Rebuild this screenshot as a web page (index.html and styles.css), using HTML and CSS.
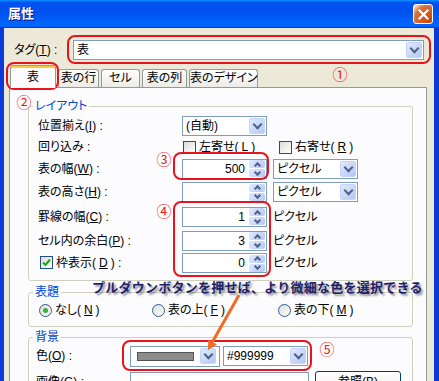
FILE: index.html
```html
<!DOCTYPE html>
<html lang="ja">
<head>
    <meta charset="UTF-8">
    <meta name="viewport" content="width=device-width, initial-scale=1.0">
    <title>属性</title>
    <link rel="stylesheet" href="styles.css">
</head>
<body>
<div class="window">
    <div class="titlebar">
        <span class="title">属性</span>
        <span class="close">
            <svg width="11" height="11" viewBox="0 0 11 11"><path d="M1.5 1.5 L9.5 9.5 M9.5 1.5 L1.5 9.5" stroke="#fff" stroke-width="2.2" stroke-linecap="square"/></svg>
        </span>
    </div>

    <div class="frame">
        <div class="tag-row">
            <span class="tag-label">タグ(<u>T</u>) :</span>
            <div class="select tag-select"><span class="value">表</span><span class="drop"></span></div>
        </div>

        <div class="tabs">
            <div class="tab active">表</div>
            <div class="tab tab-row">表の行</div>
            <div class="tab tab-cell">セル</div>
            <div class="tab tab-col">表の列</div>
            <div class="tab tab-design">表のデザイン</div>
        </div>

        <div class="panel">
            <fieldset class="group">
                <legend>レイアウト</legend>
                <div class="rows layout-rows">
                    <div class="row h23">
                        <span class="lbl">位置揃え(<u>I</u>) :</span>
                        <div class="ctrls">
                            <div class="select"><span class="value">(自動)</span><span class="drop"></span></div>
                        </div>
                    </div>
                    <div class="row h20">
                        <span class="lbl">回り込み :</span>
                        <div class="ctrls">
                            <span class="check first"><span class="box"></span>左寄せ(<u>L</u>)</span>
                            <span class="check"><span class="box"></span>右寄せ(<u>R</u>)</span>
                        </div>
                    </div>
                    <div class="row h23">
                        <span class="lbl">表の幅(<u>W</u>) :</span>
                        <div class="ctrls">
                            <div class="spin"><span class="value">500</span><span class="spin-btns"><span class="up"></span><span class="down"></span></span></div>
                            <div class="select"><span class="value">ピクセル</span><span class="drop"></span></div>
                        </div>
                    </div>
                    <div class="row h24">
                        <span class="lbl">表の高さ(<u>H</u>) :</span>
                        <div class="ctrls">
                            <div class="spin"><span class="value"></span><span class="spin-btns"><span class="up"></span><span class="down"></span></span></div>
                            <div class="select"><span class="value">ピクセル</span><span class="drop"></span></div>
                        </div>
                    </div>
                    <div class="row h25">
                        <span class="lbl">罫線の幅(<u>C</u>) :</span>
                        <div class="ctrls">
                            <div class="spin"><span class="value">1</span><span class="spin-btns"><span class="up"></span><span class="down"></span></span></div>
                            <span class="unit">ピクセル</span>
                        </div>
                    </div>
                    <div class="row h23">
                        <span class="lbl">セル内の余白(<u>P</u>) :</span>
                        <div class="ctrls">
                            <div class="spin"><span class="value">3</span><span class="spin-btns"><span class="up"></span><span class="down"></span></span></div>
                            <span class="unit">ピクセル</span>
                        </div>
                    </div>
                    <div class="row h22">
                        <span class="lbl"><span class="check checked"><span class="box"><svg width="9" height="9" viewBox="0 0 9 9"><path d="M1 4.5 L3.5 7 L8 1.5" fill="none" stroke="#21a121" stroke-width="2"/></svg></span>枠表示(<u>D</u>) :</span></span>
                        <div class="ctrls">
                            <div class="spin"><span class="value">0</span><span class="spin-btns"><span class="up"></span><span class="down"></span></span></div>
                            <span class="unit">ピクセル</span>
                        </div>
                    </div>
                </div>
            </fieldset>

            <fieldset class="group caption-group">
                <legend>表題</legend>
                <div class="rows radio-row">
                    <span class="radio on w113"><span class="dot"></span>なし(<u>N</u>)</span>
                    <span class="radio w126"><span class="dot"></span>表の上(<u>F</u>)</span>
                    <span class="radio"><span class="dot"></span>表の下(<u>M</u>)</span>
                </div>
            </fieldset>

            <fieldset class="group bg-group">
                <legend>背景</legend>
                <div class="rows bg-rows">
                    <div class="row h22">
                        <span class="lbl lbl-short">色(<u>O</u>) :</span>
                        <div class="ctrls tight">
                            <div class="select color-select"><span class="swatch"></span><span class="drop"></span></div>
                            <div class="select hex-select"><span class="value">#999999</span><span class="drop"></span></div>
                        </div>
                    </div>
                    <div class="row image-row">
                        <span class="lbl lbl-short">画像(<u>G</u>) :</span>
                        <div class="ctrls">
                            <div class="text-input"></div>
                            <div class="button">参照(<u>B</u>)</div>
                        </div>
                    </div>
                </div>
            </fieldset>
        </div>
    </div>

    <!-- annotations drawn over the dialog -->
    <div class="mark mark-tag"></div>
    <div class="mark mark-tab"></div>
    <div class="mark mark-width"></div>
    <div class="mark mark-spins"></div>
    <div class="mark mark-color"></div>

    <span class="num num-1">①</span>
    <span class="num num-2">②</span>
    <span class="num num-3">③</span>
    <span class="num num-4">④</span>
    <span class="num num-5">⑤</span>

    <div class="callout">プルダウンボタンを押せば、より微細な色を選択できる</div>
    <svg class="arrow" width="439" height="381" viewBox="0 0 439 381">
        <line x1="239" y1="295" x2="212.4" y2="342.1" stroke="#f26b22" stroke-width="3"/>
        <polygon points="208,350 217,344.5 208.2,339.4" fill="#f26b22"/>
    </svg>
</div>
</body>
</html>
```

FILE: styles.css
```css
* {
    box-sizing: border-box;
}
html, body {
    margin: 0;
    height: 381px;
    overflow: hidden;
}
body {
    font-family: "Liberation Sans", "Noto Sans CJK JP", sans-serif;
    font-size: 12px;
    line-height: 14px;
    font-feature-settings: "palt";
    text-autospace: no-autospace;
    color: #000;
    background: #ece9d8;
}
u {
    text-decoration-thickness: 1px;
    text-underline-offset: 1px;
}
.window {
    position: relative;
    width: 439px;
    height: 381px;
}

/* title bar */
.titlebar {
    height: 28px;
    display: flex;
    align-items: center;
    justify-content: space-between;
    padding: 0 6px 0 8px;
    background: linear-gradient(180deg, #0997ff, #0053ee 8%, #0050ee 40%, #0066ff 88%, #0066ff 93%, #005bff 95%, #003dd7 96%, #003dd7);
}
.title {
    color: #fff;
    font-weight: bold;
    font-size: 13px;
    text-shadow: 1px 1px #0f1089;
}
.close {
    width: 20px;
    height: 20px;
    border: 1px solid #fff;
    border-radius: 3px;
    display: flex;
    align-items: center;
    justify-content: center;
    background: radial-gradient(circle at 90% 90%, #cc4600 0, #dc6527 55%, #cd7546 70%, #ffccb2 90%, #fff 100%);
}

/* window body */
.frame {
    height: 353px;
    border-left: 4px solid #0a3bd6;
    border-right: 5px solid #0a3bd6;
    padding: 12px 7px 0 5px;
    overflow: hidden;
}
.tag-row {
    display: flex;
    align-items: center;
    height: 20px;
    padding-left: 5px;
}
.tag-label {
    width: 59px;
}

/* controls */
.select {
    width: 85px;
    height: 20px;
    border: 1px solid #7f9db9;
    background: #fff;
    display: flex;
    align-items: center;
    padding: 0 1px 0 3px;
}
.select .value {
    flex: 1;
    white-space: nowrap;
}
.tag-select {
    width: 351px;
}
.drop {
    width: 16px;
    height: 16px;
    border: 1px solid #c3d3fd;
    border-radius: 2px;
    background: linear-gradient(135deg, #e1eafe, #b4c8f6);
    display: flex;
    align-items: center;
    justify-content: center;
}
.drop::after {
    content: "";
    width: 5px;
    height: 5px;
    margin-top: -3px;
    border-right: 2px solid #4d6185;
    border-bottom: 2px solid #4d6185;
    transform: rotate(45deg);
}
.spin {
    width: 85px;
    height: 20px;
    border: 1px solid #7f9db9;
    background: #fff;
    display: flex;
    align-items: center;
    padding-right: 1px;
}
.spin .value {
    flex: 1;
    text-align: right;
    padding-right: 4px;
}
.spin-btns {
    width: 16px;
    height: 17px;
    display: flex;
    flex-direction: column;
    gap: 1px;
}
.spin-btns span {
    flex: 1;
    border-radius: 2px;
    background: linear-gradient(135deg, #e1eafe, #b4c8f6);
    display: flex;
    align-items: center;
    justify-content: center;
}
.spin-btns span::after {
    content: "";
    width: 3px;
    height: 3px;
    border-right: 2px solid #4d6185;
    border-bottom: 2px solid #4d6185;
}
.spin-btns .up::after {
    margin-top: 2px;
    transform: rotate(-135deg);
}
.spin-btns .down::after {
    margin-top: -2px;
    transform: rotate(45deg);
}
.check {
    display: inline-flex;
    align-items: center;
    gap: 3px;
    white-space: nowrap;
}
.check .box {
    width: 13px;
    height: 13px;
    border: 1px solid #1c5180;
    background: linear-gradient(135deg, #dcdcd7, #fff);
    display: flex;
    align-items: center;
    justify-content: center;
}
.check.first {
    width: 90px;
    margin-left: 1px;
}
.check.checked {
    margin-left: 2px;
}
.radio {
    display: inline-flex;
    align-items: center;
    gap: 3px;
}
.radio .dot {
    width: 13px;
    height: 13px;
    border: 1px solid #2f5a8f;
    border-radius: 50%;
    background: linear-gradient(135deg, #dcdcd7, #fff);
    display: flex;
    align-items: center;
    justify-content: center;
}
.radio.on .dot::after {
    content: "";
    width: 5px;
    height: 5px;
    border-radius: 50%;
    background: #3cae3c;
}
.w113 {
    width: 113px;
}
.w126 {
    width: 126px;
}
.unit {
    white-space: nowrap;
}
.swatch {
    width: 57px;
    height: 9px;
    margin: 0 6px 0 3px;
    border: 1px solid #555;
    background: #8c8c8c;
}
.color-select {
    width: 90px;
    height: 21px;
}
.hex-select {
    width: 85px;
}
.text-input {
    width: 179px;
    height: 21px;
    border: 1px solid #7f9db9;
    background: #fff;
}
.button {
    width: 86px;
    height: 23px;
    margin-top: 1px;
    border: 1px solid #003c74;
    border-radius: 3px;
    background: linear-gradient(#fff, #ecebe6);
    text-align: center;
    line-height: 20px;
}

/* tabs */
.tabs {
    display: flex;
    align-items: flex-end;
    height: 22px;
    margin-top: 5px;
    padding-left: 1px;
}
.tab {
    height: 18px;
    margin-left: 2px;
    border: 1px solid #919b9c;
    border-bottom: none;
    border-radius: 3px 3px 0 0;
    background: linear-gradient(#fff, #ecebe6);
    text-align: center;
    line-height: 17px;
    white-space: nowrap;
}
.tab.active {
    position: relative;
    z-index: 1;
    width: 46px;
    height: 23px;
    margin: 0 0 -1px 0;
    border-top-color: #e68b2c;
    box-shadow: inset 0 2px 0 #ffc73c;
    background: #fcfcfe;
    line-height: 23px;
}
.tab-row {
    width: 41px;
}
.tab-cell {
    width: 39px;
}
.tab-col {
    width: 45px;
}
.tab-design {
    width: 69px;
}
.panel {
    height: 300px;
    border: 1px solid #919b9c;
    background: #fcfcfe;
    padding: 11px 13px 0 18px;
}

/* group boxes */
.group {
    margin: 0;
    padding: 0 0 6px 0;
    border: 1px solid #d0d0bf;
    border-radius: 3px;
    min-width: 0;
}
.group legend {
    margin-left: 4px;
    padding: 0 2px;
    color: #0046d5;
    line-height: 14px;
}
.caption-group {
    margin-top: 4px;
}
.bg-group {
    margin-top: 3px;
}
.layout-rows {
    margin: 1px 0 0 9px;
}
.radio-row {
    display: flex;
    align-items: center;
    height: 20px;
    margin: 1px 0 0 10px;
}
.bg-rows {
    margin: 1px 0 0 7px;
}
.row {
    display: flex;
    align-items: center;
}
.h20 { height: 20px; }
.h22 { height: 22px; }
.h23 { height: 23px; }
.h24 { height: 24px; }
.h25 { height: 25px; }
.lbl {
    width: 144px;
    white-space: nowrap;
}
.lbl-short {
    width: 94px;
}
.ctrls {
    display: flex;
    align-items: center;
    gap: 6px;
}
.ctrls.tight {
    gap: 3px;
}
.image-row {
    align-items: flex-start;
    margin-top: 3px;
}
.image-row .lbl {
    margin-top: 5px;
}

/* annotations */
.mark {
    position: absolute;
    border: 2px solid #e8141b;
    border-radius: 8px;
}
.mark-tag { left: 67px; top: 35px; width: 364px; height: 29px; }
.mark-tab { left: 6px; top: 62px; width: 53px; height: 28px; }
.mark-width { left: 173px; top: 152px; width: 96px; height: 28px; }
.mark-spins { left: 173px; top: 201px; width: 98px; height: 76px; }
.mark-color { left: 122px; top: 340px; width: 190px; height: 31px; }
.num {
    position: absolute;
    width: 16px;
    height: 16px;
    line-height: 16px;
    text-align: center;
    font-family: "Noto Sans CJK JP", sans-serif;
    font-size: 15px;
    color: #f01818;
    font-feature-settings: normal;
}
.num-1 { left: 332px; top: 66px; }
.num-2 { left: 16px; top: 94px; }
.num-3 { left: 156px; top: 151px; }
.num-4 { left: 156px; top: 203px; }
.num-5 { left: 319px; top: 341px; }
.callout {
    position: absolute;
    left: 92px;
    top: 279px;
    font-family: "Noto Sans CJK JP", sans-serif;
    font-size: 13px;
    line-height: 16px;
    font-weight: bold;
    letter-spacing: 0.25px;
    font-feature-settings: normal;
    white-space: nowrap;
    color: #1e1f66;
    text-shadow: 2px 2px 2px rgba(60, 60, 80, 0.55);
}
.arrow {
    position: absolute;
    left: 0;
    top: 0;
    pointer-events: none;
}
```
